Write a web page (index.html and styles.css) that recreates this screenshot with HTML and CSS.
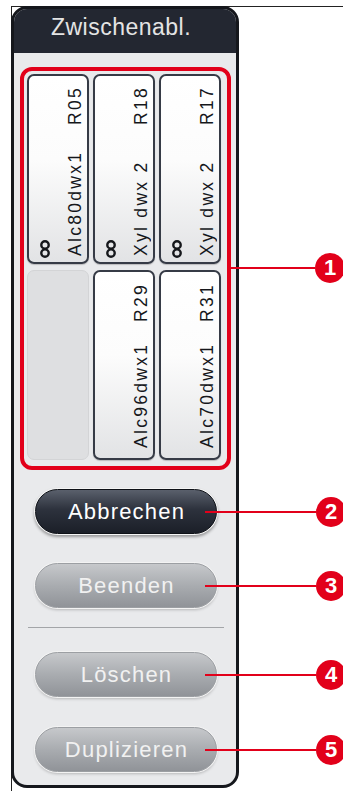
FILE: index.html
```html
<!DOCTYPE html>
<html lang="de">
<head>
  <meta charset="UTF-8">
  <title>Zwischenablage</title>
  <link rel="stylesheet" href="styles.css">
</head>
<body>

<div class="sheet">
  <div class="panel">
    <div class="panel-head">Zwischenabl.</div>

    <div class="panel-body">
      <div class="slots">
        <div class="slot-grid">
          <div class="slot">
            <div class="slot-icon"><svg width="14" height="18" viewBox="0 0 14 18"><circle cx="7" cy="4.9" r="3.7"/><circle cx="7" cy="13.1" r="3.7"/></svg></div>
            <div class="slot-label"><span>Alc80dwx1</span><span>R05</span></div>
          </div>
          <div class="slot">
            <div class="slot-icon"><svg width="14" height="18" viewBox="0 0 14 18"><circle cx="7" cy="4.9" r="3.7"/><circle cx="7" cy="13.1" r="3.7"/></svg></div>
            <div class="slot-label"><span>Xyl dwx 2</span><span>R18</span></div>
          </div>
          <div class="slot">
            <div class="slot-icon"><svg width="14" height="18" viewBox="0 0 14 18"><circle cx="7" cy="4.9" r="3.7"/><circle cx="7" cy="13.1" r="3.7"/></svg></div>
            <div class="slot-label"><span>Xyl dwx 2</span><span>R17</span></div>
          </div>
          <div class="slot slot-empty"></div>
          <div class="slot">
            <div class="slot-icon"></div>
            <div class="slot-label low"><span>Alc96dwx1</span><span>R29</span></div>
          </div>
          <div class="slot">
            <div class="slot-icon"></div>
            <div class="slot-label low"><span>Alc70dwx1</span><span>R31</span></div>
          </div>
        </div>
        <div class="callout callout-frame"><span class="leader"></span><span class="num">1</span></div>
      </div>

      <button class="btn btn-dark btn-first">Abbrechen
        <span class="callout"><span class="leader"></span><span class="num">2</span></span>
      </button>
      <button class="btn btn-gray btn-second">Beenden
        <span class="callout"><span class="leader"></span><span class="num">3</span></span>
      </button>

      <hr class="divider">

      <button class="btn btn-gray btn-third">Löschen
        <span class="callout"><span class="leader"></span><span class="num">4</span></span>
      </button>
      <button class="btn btn-gray btn-fourth">Duplizieren
        <span class="callout"><span class="leader"></span><span class="num">5</span></span>
      </button>
    </div>
  </div>
</div>

</body>
</html>
```

FILE: styles.css
```css
body {
  margin: 0;
  background: #fff;
  font-family: "Liberation Sans", Arial, sans-serif;
}
.sheet {
  margin: 6px 0 0 11px;
  height: 784px;
  border-top: 1px solid #222;
  border-left: 1px solid #222;
}
.panel {
  box-sizing: border-box;
  width: 228px;
  height: 782px;
  margin: -1px 0 0 -1px;
  border: 3px solid #15171c;
  border-radius: 16px;
  background: #e9eaec;
}
.panel-head {
  height: 44px;
  box-sizing: border-box;
  padding: 5px 8px 0 0;
  border-radius: 13px 13px 0 0;
  background: #232731;
  color: #e4e4e4;
  font-size: 23px;
  line-height: 26px;
  letter-spacing: .5px;
  text-align: center;
}
.panel-body {
  padding: 14px 5px 0 6px;
}

/* rack slots */
.slots {
  position: relative;
  padding: 3px 6px 6px 3px;
  border: 4px solid #e2001a;
  border-radius: 12px;
}
.slot-grid {
  display: grid;
  grid-template-columns: repeat(3, 62px);
  grid-template-rows: 190px 190px;
  column-gap: 4px;
  row-gap: 6px;
}
.slot {
  display: flex;
  box-sizing: border-box;
  border: 2px solid #363b46;
  border-radius: 7px;
  background: linear-gradient(#fff 0%, #fcfcfc 45%, #e2e3e5 100%);
  box-shadow: 0 1px 1px rgba(0, 0, 0, .2);
  color: #15171b;
}
.slot-empty {
  border: 1px solid #d3d4d6;
  background: #dedfe1;
  box-shadow: none;
}
.slot-icon {
  box-sizing: border-box;
  width: 36px;
  flex: none;
  display: flex;
  align-items: flex-end;
  padding: 0 0 4px 9px;
}
.slot-icon svg {
  fill: none;
  stroke: #15171b;
  stroke-width: 2.4;
}
.slot-label {
  flex: 1;
  display: flex;
  justify-content: space-between;
  padding-inline: 6px 10px;
  writing-mode: vertical-rl;
  text-orientation: sideways;
  transform: rotate(180deg);
  font-size: 17.5px;
  line-height: 20px;
  letter-spacing: 2.3px;
  white-space: pre;
}
.slot-label.low {
  padding-inline: 10px 11px;
}

/* buttons */
.btn {
  position: relative;
  display: flex;
  align-items: center;
  justify-content: center;
  box-sizing: border-box;
  width: 182px;
  height: 45px;
  margin-left: 15px;
  padding: 0 0 0 1px;
  border-radius: 23px;
  font-family: "Liberation Sans", Arial, sans-serif;
  font-size: 22px;
  letter-spacing: 1.2px;
}
.btn-dark {
  border: 1px solid #0e1117;
  background: linear-gradient(#5a606c 0%, #2d323d 45%, #1b1f28 100%);
  color: #fff;
  box-shadow: 0 0 0 1px #f5f5f5, 0 2px 3px 1px rgba(0, 0, 0, .35);
}
.btn-gray {
  border: 1px solid #9c9fa3;
  background: linear-gradient(#c6c8cb 0%, #a9acb0 50%, #909398 100%);
  color: #f1f1f1;
  box-shadow: 0 0 0 1px #f3f3f3, 0 2px 3px rgba(0, 0, 0, .22);
}
.btn-first { margin-top: 19px; }
.btn-second { margin-top: 29px; }
.btn-third { margin-top: 24px; }
.btn-fourth { margin-top: 30px; }

.divider {
  width: 196px;
  height: 0;
  margin: 19px 0 0 8px;
  border: 0;
  border-top: 1px solid #a3a5a8;
}

/* numbered callouts */
.callout {
  position: absolute;
  top: 50%;
  left: 169px;
  width: 141px;
  display: flex;
  align-items: center;
  transform: translateY(-50%);
  letter-spacing: 0;
}
.callout-frame {
  top: 197px;
  left: 206px;
  width: 115px;
}
.leader {
  flex: 1;
  height: 2px;
  background: #e2001a;
}
.num {
  width: 30px;
  height: 30px;
  display: flex;
  align-items: center;
  justify-content: center;
  border-radius: 50%;
  background: #e2001a;
  color: #fff;
  font-family: "Liberation Sans", Arial, sans-serif;
  font-size: 22px;
  font-weight: bold;
}
```
